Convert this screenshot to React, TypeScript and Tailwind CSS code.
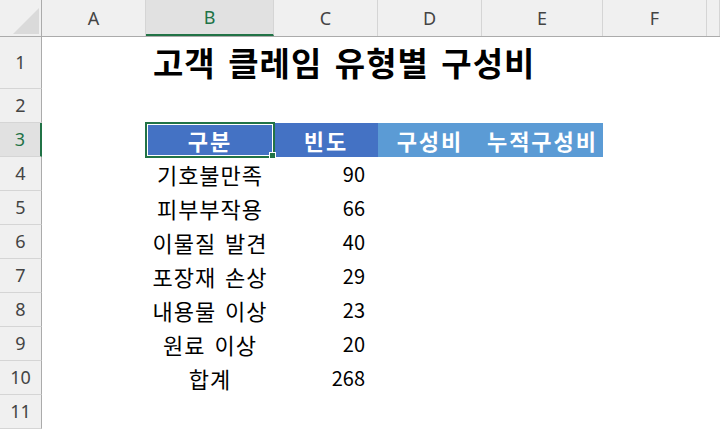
const cols = [
  { key: "A", w: "w-[104px]" },
  { key: "B", w: "w-[128px]" },
  { key: "C", w: "w-[104px]" },
  { key: "D", w: "w-[104px]" },
  { key: "E", w: "w-[121px]" },
  { key: "F", w: "w-[104px]" },
  { key: "", w: "flex-1" },
];

const data: [string, number][] = [
  ["기호불만족", 90],
  ["피부부작용", 66],
  ["이물질 발견", 40],
  ["포장재 손상", 29],
  ["내용물 이상", 23],
  ["원료 이상", 20],
  ["합계", 268],
];

const headFont = "font-['Noto_Sans','Open_Sans',sans-serif]";
const cellFont = "font-['Noto_Sans_CJK_KR','Noto_Sans',sans-serif]";

function RowHead({ n, h = "h-[34px]", active = false }: { n: number; h?: string; active?: boolean }) {
  return (
    <div
      className={`${h} w-[42px] flex items-center justify-center border-b border-[#d5d5d5] text-[18px] ${
        active ? "bg-[#e1e1e1] text-[#217346] border-r-2 border-r-[#217346]" : "bg-[#f0f0f0] text-[#444] border-r border-r-[#ababab]"
      }`}
    >
      {n}
    </div>
  );
}

export default function App() {
  return (
    <div className={`relative w-[720px] h-[429px] overflow-hidden bg-white ${headFont}`}>
      {/* column headers */}
      <div className="flex h-[37px] bg-[#f0f0f0] border-b border-[#ababab]">
        <div className="w-[42px] border-r border-[#ababab] relative">
          <svg className="absolute left-0 top-0" width="42" height="37">
            <polygon points="39,8 39,34 13,34" fill="#dadada" />
          </svg>
        </div>
        {cols.map((c) => (
          <div
            key={c.key || "g"}
            className={`${c.w} flex items-center justify-center text-[18px] border-r border-[#d5d5d5] ${
              c.key === "B" ? "bg-[#e1e1e1] text-[#217346] border-b-2 border-b-[#217346]" : "text-[#444]"
            }`}
          >
            {c.key}
          </div>
        ))}
      </div>

      <div className="flex">
        <div className="flex flex-col">
          <RowHead n={1} h="h-[52px]" />
          {Array.from({ length: 10 }, (_, i) => (
            <RowHead key={i} n={i + 2} active={i + 2 === 3} />
          ))}
        </div>

        <div className={`flex flex-col ${cellFont} text-black`}>
          {/* row 1 title */}
          <div className="h-[52px] flex items-center pl-[111px]">
            <span className="text-[33px] font-bold whitespace-nowrap tracking-[1px] [word-spacing:4px]">
              고객 클레임 유형별 구성비
            </span>
          </div>
          {/* row 2 */}
          <div className="h-[34px]" />
          {/* row 3 header */}
          <div className="h-[34px] flex text-white font-bold text-[22px] tracking-[2px]">
            <div className="w-[104px]" />
            <div className="w-[128px] bg-[#4472c4] flex items-center justify-center">구분</div>
            <div className="w-[104px] bg-[#4472c4] flex items-center justify-center">빈도</div>
            <div className="w-[104px] bg-[#5b9bd5] flex items-center justify-center">구성비</div>
            <div className="w-[121px] bg-[#5b9bd5] flex items-center justify-center">누적구성비</div>
          </div>
          {data.map(([label, v]) => (
            <div key={label} className="h-[34px] flex">
              <div className="w-[104px]" />
              <div className="w-[128px] flex items-center justify-center whitespace-nowrap text-[22px] tracking-[1px] [word-spacing:3px]">
                {label}
              </div>
              <div className="w-[104px] flex items-center justify-end pr-[13px] text-[20px]">{v}</div>
            </div>
          ))}
        </div>
      </div>

      {/* active cell B3 */}
      <div className="absolute left-[145px] top-[122px] w-[130px] h-[36px] border-2 border-[#217346]">
        <div className="w-full h-full border border-white" />
      </div>
      <div className="absolute left-[269px] top-[152px] w-[7px] h-[7px] bg-[#217346] border border-white" />
    </div>
  );
}
